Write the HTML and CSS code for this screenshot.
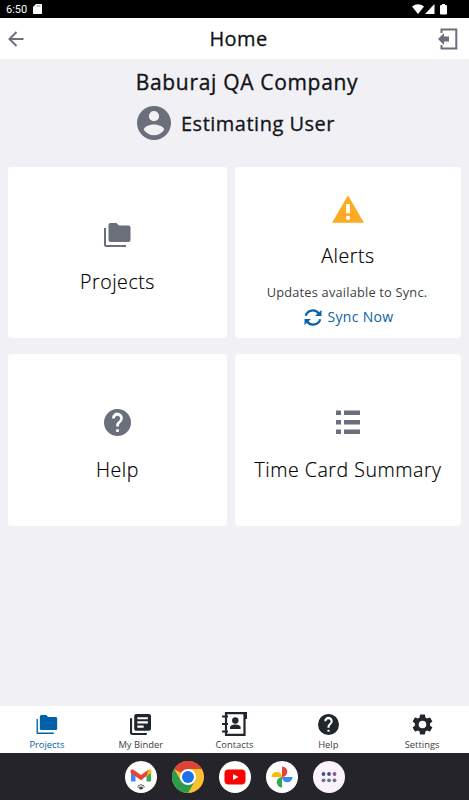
FILE: index.html
```html
<!DOCTYPE html>
<html lang="en">
<head>
    <meta charset="UTF-8">
    <meta name="viewport" content="width=device-width, initial-scale=1.0">
    <title>Home</title>
    <link rel="stylesheet" href="styles.css">
</head>
<body>
    <div class="status-bar">
        <span class="clock">6:50</span>
        <svg class="sd-icon" viewBox="0 0 9 10"><path d="M3 0h5.2q.8 0 .8.8v8.4q0 .8-.8.8H.8Q0 10 0 9.200V3z"/><path class="slot" d="M3.500 1.500h4v1h-4z"/></svg>
        <svg class="signal-icons" viewBox="0 0 36 11">
            <path d="M0 2.500Q6-2 12 2.500L6 10z"/>
            <path d="M22.500 0v10H13z"/>
            <path d="M30 0h3v1h1q1 0 1 1v7.500q0 1-1 1h-5q-1 0-1-1V2q0-1 1-1h1z"/>
        </svg>
    </div>

    <header class="header">
        <svg class="back-icon" viewBox="0 0 16 16"><path d="M15.500 8H1.500M8.500 1 1.500 8l7 7"/></svg>
        <h1>Home</h1>
        <svg class="exit-icon" viewBox="0 0 20 22"><path class="door" d="M3.500 5V1.500h14.800v19H3.500V17"/><path d="M0 11 6 5v3.500h5v5H6V17z"/></svg>
    </header>

    <main class="main">
        <h2 class="company">Baburaj QA Company</h2>
        <div class="user">
            <svg class="avatar" viewBox="2 2 20 20"><path d="M12 2a10 10 0 1 0 0 20 10 10 0 0 0 0-20zm0 3a3 3 0 1 1 0 6 3 3 0 0 1 0-6zm0 14.200a7.200 7.200 0 0 1-6-3.220c.03-1.990 4-3.080 6-3.080s5.970 1.090 6 3.080a7.200 7.200 0 0 1-6 3.220z"/></svg>
            <span>Estimating User</span>
        </div>

        <div class="cards">
            <div class="card projects">
                <svg viewBox="0 0 27 24"><use href="#folders"/></svg>
                <h3>Projects</h3>
            </div>
            <div class="card alerts">
                <svg viewBox="1 2 22 19"><path fill-rule="evenodd" d="M12 2 1 21h22zM10.700 8h2.600v6.500h-2.600zM12 16.100a1.500 1.500 0 1 1 0 3 1.500 1.500 0 0 1 0-3z"/></svg>
                <h3>Alerts</h3>
                <p>Updates available to Sync.</p>
                <a class="sync" href="#">
                    <svg viewBox="0 0 18 17"><path class="arc" d="M1.800 6.800A7.200 6.800 0 0 1 14.800 4.500M16.200 10.200A7.200 6.800 0 0 1 3.200 12.500"/><path d="M17.500 1v6h-6.500zM.5 16v-6H7z"/></svg>
                    <span>Sync Now</span>
                </a>
            </div>
            <div class="card help">
                <svg viewBox="0 0 20 20"><use href="#question"/></svg>
                <h3>Help</h3>
            </div>
            <div class="card time">
                <svg viewBox="0 0 24 25"><path d="M0 .5h5v4.600H0zm8 0h16v4.600H8zM0 10h5v4.600H0zm8 0h16v4.600H8zM0 19.500h5v4.600H0zm8 0h16v4.600H8z"/></svg>
                <h3>Time Card Summary</h3>
            </div>
        </div>
    </main>

    <nav class="tabs">
        <a class="tab active" href="#">
            <svg class="folder" viewBox="0 0 27 24"><use href="#folders"/></svg>
            <span>Projects</span>
        </a>
        <a class="tab" href="#">
            <svg class="binder" viewBox="2 2 20 20"><path d="M4 6H2v14a2 2 0 0 0 2 2h14v-2H4z"/><path d="M20 2H8a2 2 0 0 0-2 2v12c0 1.100.9 2 2 2h12a2 2 0 0 0 2-2V4a2 2 0 0 0-2-2zm-1 9H9V9h10zm-4 4H9v-2h6zm4-8H9V5h10z"/></svg>
            <span>My Binder</span>
        </a>
        <a class="tab" href="#">
            <svg class="contacts" viewBox="0 0 25 24"><path class="book" d="M4 1.200h18.500v21.600H4zM0 4.500h6M0 12h6M0 19.500h6"/><path d="M22 0h3v7h-3z"/><circle cx="13.300" cy="8.500" r="3.200"/><path d="M8 17v-1.500c0-4 10.600-4 10.600 0V17z"/></svg>
            <span>Contacts</span>
        </a>
        <a class="tab" href="#">
            <svg class="question" viewBox="0 0 20 20"><use href="#question"/></svg>
            <span>Help</span>
        </a>
        <a class="tab" href="#">
            <svg class="gear" viewBox="2 2 20 20"><path d="M19.140 12.940c.04-.3.06-.61.06-.94s-.02-.64-.07-.94l2.030-1.580a.49.49 0 0 0 .12-.61l-1.920-3.320a.49.49 0 0 0-.59-.22l-2.390.96c-.5-.38-1.030-.7-1.620-.94l-.36-2.540A.48.48 0 0 0 13.920 2.400h-3.840a.48.48 0 0 0-.48.41l-.36 2.540c-.59.24-1.130.57-1.620.94l-2.390-.96a.49.49 0 0 0-.59.22L2.720 8.870a.48.48 0 0 0 .12.61l2.030 1.580c-.05.3-.09.63-.09.94s.02.64.07.94l-2.030 1.580a.49.49 0 0 0-.12.61l1.920 3.320c.12.22.37.29.59.22l2.390-.96c.5.38 1.030.7 1.620.94l.36 2.540c.05.24.24.41.48.41h3.840c.24 0 .44-.17.47-.41l.36-2.540c.59-.24 1.130-.56 1.620-.94l2.390.96c.22.08.47 0 .59-.22l1.920-3.320a.48.48 0 0 0-.12-.61zM12 15.600a3.600 3.600 0 1 1 0-7.200 3.600 3.600 0 0 1 0 7.200z"/></svg>
            <span>Settings</span>
        </a>
    </nav>

    <div class="dock">
        <svg viewBox="0 0 32 32">
            <circle cx="16" cy="16" r="16" fill="#fff"/>
            <path fill="#4285f4" d="M6 10v10.500h4.500V13z"/>
            <path fill="#34a853" d="M26 10v10.500h-4.500V13z"/>
            <path fill="#fbbc04" d="m21.500 10.500 3-2.200q2-.5 2 2v1.500l-5 3.500z"/>
            <path fill="#ea4335" d="M5.500 11.800V10q.5-2.500 3-1.300L16 14l7.500-5.300-2 6.300L16 19.200z"/>
            <g fill="#444"><ellipse cx="16" cy="27" rx="2" ry="1.500"/><circle cx="14" cy="24.500" r=".8"/><circle cx="16" cy="23.800" r=".8"/><circle cx="18" cy="24.500" r=".8"/><circle cx="13" cy="26" r=".7"/><circle cx="19" cy="26" r=".7"/></g>
        </svg>
        <svg viewBox="0 0 32 32">
            <circle cx="16" cy="16" r="16" fill="#fbc02d"/>
            <path fill="#dc4437" d="M16 16 2.140 8A16 16 0 0 1 29.860 8H16z"/>
            <path fill="#2c9c4c" d="M2.140 8A16 16 0 0 0 16 32l7-12-7-4-7 4z"/>
            <circle cx="16" cy="16" r="8" fill="#fff"/>
            <circle cx="16" cy="16" r="6" fill="#1a73e8"/>
        </svg>
        <svg viewBox="0 0 32 32">
            <circle cx="16" cy="16" r="16" fill="#fff"/>
            <rect x="5.500" y="8.500" width="21" height="15" rx="4" fill="#f00"/>
            <path fill="#fff" d="m14 13 5.500 3-5.500 3z"/>
        </svg>
        <svg viewBox="0 0 32 32">
            <circle cx="16" cy="16" r="16" fill="#fff"/>
            <path fill="#ea4335" d="M16 5.500a5.200 5.200 0 0 1 0 10.500z"/>
            <path fill="#4285f4" d="M26.500 16a5.200 5.200 0 0 1-10.500 0z"/>
            <path fill="#34a853" d="M16 26.500A5.200 5.200 0 0 1 16 16z"/>
            <path fill="#fbbc04" d="M5.500 16A5.200 5.200 0 0 1 16 16z"/>
        </svg>
        <svg viewBox="0 0 32 32">
            <circle cx="16" cy="16" r="16" fill="#faf3fc"/>
            <g fill="#444c91"><circle cx="10.500" cy="13" r="1.900"/><circle cx="16" cy="13" r="1.900"/></g>
            <circle cx="21.500" cy="13" r="1.900" fill="#8b5b83"/>
            <g fill="#6b7186"><circle cx="10.500" cy="19.300" r="1.900"/><circle cx="16" cy="19.300" r="1.900"/><circle cx="21.500" cy="19.300" r="1.900"/></g>
        </svg>
    </div>

    <!-- shared icons -->
    <svg class="defs">
        <symbol id="folders" viewBox="0 0 27 24">
            <path d="M6.500 0h6l2.500 2.500h9.500q2 0 2 2V17q0 2-2 2h-18q-2 0-2-2V2q0-2 2-2z"/>
            <path d="M0 5h2v17h20v2H2q-2 0-2-2z"/>
        </symbol>
        <symbol id="question" viewBox="2 2 20 20">
            <path d="M12 2a10 10 0 1 0 0 20 10 10 0 0 0 0-20zm1 17h-2v-2h2zm2.070-7.750-.9.920C13.450 12.900 13 13.500 13 15h-2v-.5c0-1.100.45-2.100 1.170-2.830l1.240-1.260A2 2 0 1 0 10 9H8a4 4 0 1 1 7.070 2.250z"/>
        </symbol>
    </svg>
</body>
</html>
```
FILE: styles.css
```css
* {
    box-sizing: border-box;
}

body {
    margin: 0;
    height: 100vh;
    display: flex;
    flex-direction: column;
    overflow: hidden;
    background-color: #f0f0f5;
    color: #101418;
    font-family: "Open Sans", sans-serif;
}

h1, h2, h3, p {
    margin: 0;
}

a {
    color: inherit;
    text-decoration: none;
}

svg {
    display: block;
    flex: none;
    fill: #6b6e7b;
}

.defs {
    width: 0;
    height: 0;
    position: absolute;
}

.status-bar {
    height: 18px;
    flex: none;
    display: flex;
    align-items: center;
    padding: 0 21px 0 6px;
    background: #000;
    color: #fff;
    font: 400 11px Roboto, sans-serif;
}

.status-bar svg {
    fill: #fff;
}

.sd-icon {
    width: 9px;
    height: 10px;
    margin-left: 6px;
}

.status-bar .slot {
    fill: #888;
}

.signal-icons {
    width: 36px;
    height: 11px;
    margin-left: auto;
}

.header {
    height: 41px;
    flex: none;
    display: flex;
    align-items: center;
    justify-content: space-between;
    padding: 0 11px 0 8px;
    background: #fff;
}

.header h1 {
    font-size: 20px;
    font-weight: 500;
    letter-spacing: .4px;
    margin-left: 15px;
    -webkit-text-stroke: .3px;
}

.back-icon {
    width: 16px;
    height: 16px;
}

.back-icon path {
    fill: none;
    stroke: #6b6e7b;
    stroke-width: 2;
}

.exit-icon {
    width: 20px;
    height: 22px;
}

.exit-icon .door {
    fill: none;
    stroke: #6b6e7b;
    stroke-width: 2;
}

.main {
    flex: 1;
    padding: 8px 8px 0;
}

.company {
    height: 30px;
    line-height: 30px;
    padding-left: 25px;
    text-align: center;
    font-size: 21px;
    font-weight: 500;
    letter-spacing: .68px;
    -webkit-text-stroke: .35px;
}

.user {
    display: flex;
    align-items: center;
    gap: 10px;
    height: 34px;
    margin-top: 9px;
    padding-left: 129px;
    font-size: 20px;
    font-weight: 500;
    letter-spacing: .5px;
    -webkit-text-stroke: .3px;
}

.avatar {
    width: 34px;
    height: 34px;
}

.cards {
    display: grid;
    grid-template-columns: 219px 226px;
    grid-template-rows: 171px 172px;
    gap: 16px 8px;
    margin-top: 27px;
}

.card {
    display: flex;
    flex-direction: column;
    align-items: center;
    background: #fff;
    border-radius: 3px;
}

.card h3 {
    line-height: 28px;
    font-size: 19.5px;
    font-weight: 300;
    letter-spacing: .55px;
    -webkit-text-stroke: .2px;
    color: #000;
}

.projects {
    padding-top: 56px;
}

.projects svg {
    width: 27px;
    height: 24px;
    margin-bottom: 21px;
}

.alerts {
    padding-top: 28px;
}

.alerts > svg {
    width: 32px;
    height: 28px;
    margin-bottom: 19px;
    margin-right: 1px;
    fill: #fdab25;
}

.alerts p {
    margin-top: 12px;
    margin-right: 2px;
    line-height: 20px;
    font-size: 12.8px;
    letter-spacing: .2px;
    color: #3c3f46;
}

.sync {
    display: flex;
    align-items: center;
    gap: 6px;
    margin-top: 5px;
    margin-left: 1px;
    line-height: 20px;
    font-size: 14px;
    letter-spacing: .3px;
    color: #0b62a5;
}

.sync svg {
    width: 18px;
    height: 17px;
    fill: #0b62a5;
}

.sync .arc {
    fill: none;
    stroke: #0b62a5;
    stroke-width: 2.2;
}

.help {
    padding-top: 55px;
}

.help svg {
    width: 27px;
    height: 27px;
    margin-bottom: 20px;
}

.time {
    padding-top: 56px;
}

.time svg {
    width: 24px;
    height: 25px;
    margin-bottom: 21px;
}

.tabs {
    height: 47px;
    flex: none;
    display: flex;
    background: #fff;
}

.tab {
    flex: 1;
    height: 47px;
    display: flex;
    flex-direction: column;
    align-items: center;
    justify-content: flex-end;
    padding-bottom: 1px;
    line-height: 14px;
    font-size: 9.4px;
    color: #3c3f46;
}

.tab svg {
    width: 21px;
    height: 21px;
    margin-bottom: 3px;
    fill: #20262b;
}

.tab .folder {
    width: 22px;
    height: 19px;
    margin-bottom: 4px;
}

.tab .contacts {
    width: 25px;
    height: 24px;
    margin-bottom: 2px;
}

.contacts .book {
    fill: none;
    stroke: #20262b;
    stroke-width: 2.2;
}

.tab.active {
    color: #0b62a5;
}

.tab.active svg {
    fill: #0061a8;
}

.dock {
    height: 47px;
    flex: none;
    display: flex;
    align-items: center;
    justify-content: center;
    gap: 15px;
    background: #25242a;
}

.dock svg {
    width: 32px;
    height: 32px;
}
```
